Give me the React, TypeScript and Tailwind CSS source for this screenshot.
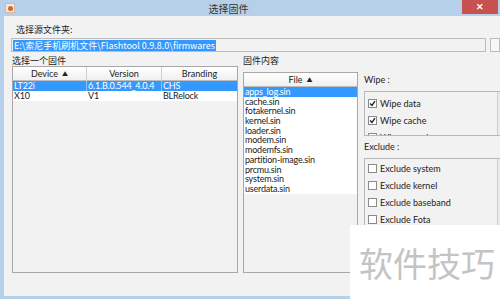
import React from 'react';

const cjk = { fontFamily: '"Noto Sans CJK SC", "Noto Sans", sans-serif' };
const ui = { fontFamily: 'Lato, "Noto Sans CJK SC", sans-serif' };

const firmwares = [
  { device: 'LT22i', version: '6.1.B.0.544_4.0.4', branding: 'CHS' },
  { device: 'X10', version: 'V1', branding: 'BLRelock' },
];

const files = [
  'apps_log.sin',
  'cache.sin',
  'fotakernel.sin',
  'kernel.sin',
  'loader.sin',
  'modem.sin',
  'modemfs.sin',
  'partition-image.sin',
  'prcmu.sin',
  'system.sin',
  'userdata.sin',
];

function Check({ checked, label }: { checked?: boolean; label: string }) {
  return (
    <div className="flex items-center gap-[3px] h-[17px] pl-[3px]">
      <div className="w-[9px] h-[9px] border border-[#8a8a8a] bg-white flex items-center justify-center">
        {checked && (
          <svg width="7" height="7" viewBox="0 0 7 7">
            <path d="M1 3.5 L3 5.5 L6 1.2" stroke="#222" strokeWidth="1.4" fill="none" />
          </svg>
        )}
      </div>
      <span className="text-[9px] text-[#222] whitespace-nowrap">{label}</span>
    </div>
  );
}

function HeaderCell({ children, className = '' }: { children: React.ReactNode; className?: string }) {
  return (
    <div
      className={`flex items-center justify-center h-[14px] text-[9px] text-[#222] bg-gradient-to-b from-white to-[#f0f0f0] border-b border-[#bdbdbd] ${className}`}
    >
      {children}
    </div>
  );
}

export default function App() {
  return (
    <div className="w-[500px] h-[299px] bg-[#b6d0ea] flex flex-col overflow-hidden" style={ui}>
      {/* title bar */}
      <div className="h-[16px] flex items-center relative shrink-0">
        <div className="ml-[5px] w-[10px] h-[10px] bg-[#f6e6d8] border border-[#d8b9a0] flex items-center justify-center">
          <div className="w-[5px] h-[5px] rounded-full bg-[#c96a3a]" />
        </div>
        <div className="flex-1 text-center text-[10px] text-[#333] pr-[20px]" style={cjk}>
          选择固件
        </div>
        <div className="w-[36px] h-[14px] self-start mr-[2px] bg-[#c8504f] flex items-center justify-center text-white text-[9px] font-bold">
          ✕
        </div>
      </div>

      {/* body */}
      <div className="flex-1 ml-[4px] mb-[3px] bg-[#f2f2f2] flex flex-col relative">
        <div className="pt-[7px] pl-[12px] text-[9px] text-[#222] h-[19px]" style={cjk}>
          选择源文件夹:
        </div>
        <div className="flex items-center mt-[3px]">
          <div className="ml-[7px] w-[480px] h-[14px] border border-[#bcbcbc] bg-[#f2f2f2] flex items-center pl-[1px]">
            <span className="bg-[#3399ff] text-white text-[9px] leading-[11px] px-[1px]" style={cjk}>
              E:\索尼手机刷机文件\Flashtool 0.9.8.0\firmwares
            </span>
          </div>
          <div className="ml-[4px] w-[10px] h-[14px] border border-[#bcbcbc] bg-[#f6f6f6]" />
        </div>

        <div className="flex mt-[4px]">
          {/* firmware table */}
          <div className="ml-[8px] w-[226px] flex flex-col">
            <div className="text-[9px] text-[#222] h-[10px] leading-[10px]" style={cjk}>
              选择一个固件
            </div>
            <div className="h-[207px] border border-[#a8a8a8] bg-[#f2f2f2] flex flex-col">
              <div className="flex">
                <HeaderCell className="w-[74px] border-r border-r-[#d0d0d0]">
                  Device <span className="ml-[4px] text-[6px]">▲</span>
                </HeaderCell>
                <HeaderCell className="w-[75px] border-r border-r-[#d0d0d0]">Version</HeaderCell>
                <HeaderCell className="flex-1">Branding</HeaderCell>
              </div>
              {firmwares.map((f, i) => (
                <div
                  key={f.device}
                  className={`flex h-[10px] text-[9px] leading-[10px] tracking-[-0.2px] ${i === 0 ? 'bg-[#3399ff] text-white' : 'bg-white text-[#222]'}`}
                >
                  <div className={`w-[74px] pl-[1px] ${i === 0 ? 'border-r border-[#8cc2ff]' : ''}`}>{f.device}</div>
                  <div className={`w-[75px] pl-[1px] ${i === 0 ? 'border-r border-[#8cc2ff]' : ''}`}>{f.version}</div>
                  <div className="flex-1 pl-[1px]">{f.branding}</div>
                </div>
              ))}
            </div>
          </div>

          {/* file list */}
          <div className="ml-[5px] w-[115px] flex flex-col">
            <div className="text-[9px] text-[#222] h-[10px] leading-[10px]" style={cjk}>
              固件内容
            </div>
            <div className="mt-[6px] h-[201px] border border-[#a8a8a8] bg-[#f2f2f2] flex flex-col">
              <HeaderCell className="w-full">
                File <span className="ml-[4px] text-[6px]">▲</span>
              </HeaderCell>
              {files.map((f, i) => (
                <div
                  key={f}
                  className={`h-[9.7px] text-[9px] leading-[9.7px] pl-[1px] overflow-hidden tracking-[-0.2px] ${i === 0 ? 'bg-[#3399ff] text-white' : 'bg-white text-[#222]'}`}
                >
                  {f}
                </div>
              ))}
            </div>
          </div>

          {/* options */}
          <div className="ml-[6px] flex-1 flex flex-col">
            <div className="mt-[19px] text-[9px] text-[#222] h-[10px] leading-[10px]">Wipe :</div>
            <div className="mt-[6px] h-[45px] border border-r-0 border-[#b8b8b8] overflow-hidden pt-[3px] relative">
              <Check checked label="Wipe data" />
              <Check checked label="Wipe cache" />
              <Check checked label="Wipe apps_log" />
              <div className="absolute right-0 top-0 bottom-0 w-[3px] border-l border-[#cfcfcf] bg-[#eaeaea]" />
            </div>
            <div className="mt-[6px] text-[9px] text-[#222] h-[10px] leading-[10px]">Exclude :</div>
            <div className="mt-[6px] h-[80px] border border-r-0 border-[#b8b8b8] overflow-hidden pt-[1px] relative">
              <Check label="Exclude system" />
              <Check label="Exclude kernel" />
              <Check label="Exclude baseband" />
              <Check label="Exclude Fota" />
              <div className="absolute right-0 top-0 bottom-0 w-[3px] border-l border-[#cfcfcf] bg-[#eaeaea]" />
            </div>
          </div>
        </div>

        {/* watermark */}
        <div className="absolute left-[346px] top-[209px] w-[150px] h-[75px] bg-white flex items-center justify-center">
          <span className="text-[34px] text-[#c4c4c4] whitespace-nowrap pl-[4px]" style={cjk}>
            软件技巧
          </span>
        </div>
      </div>
    </div>
  );
}
